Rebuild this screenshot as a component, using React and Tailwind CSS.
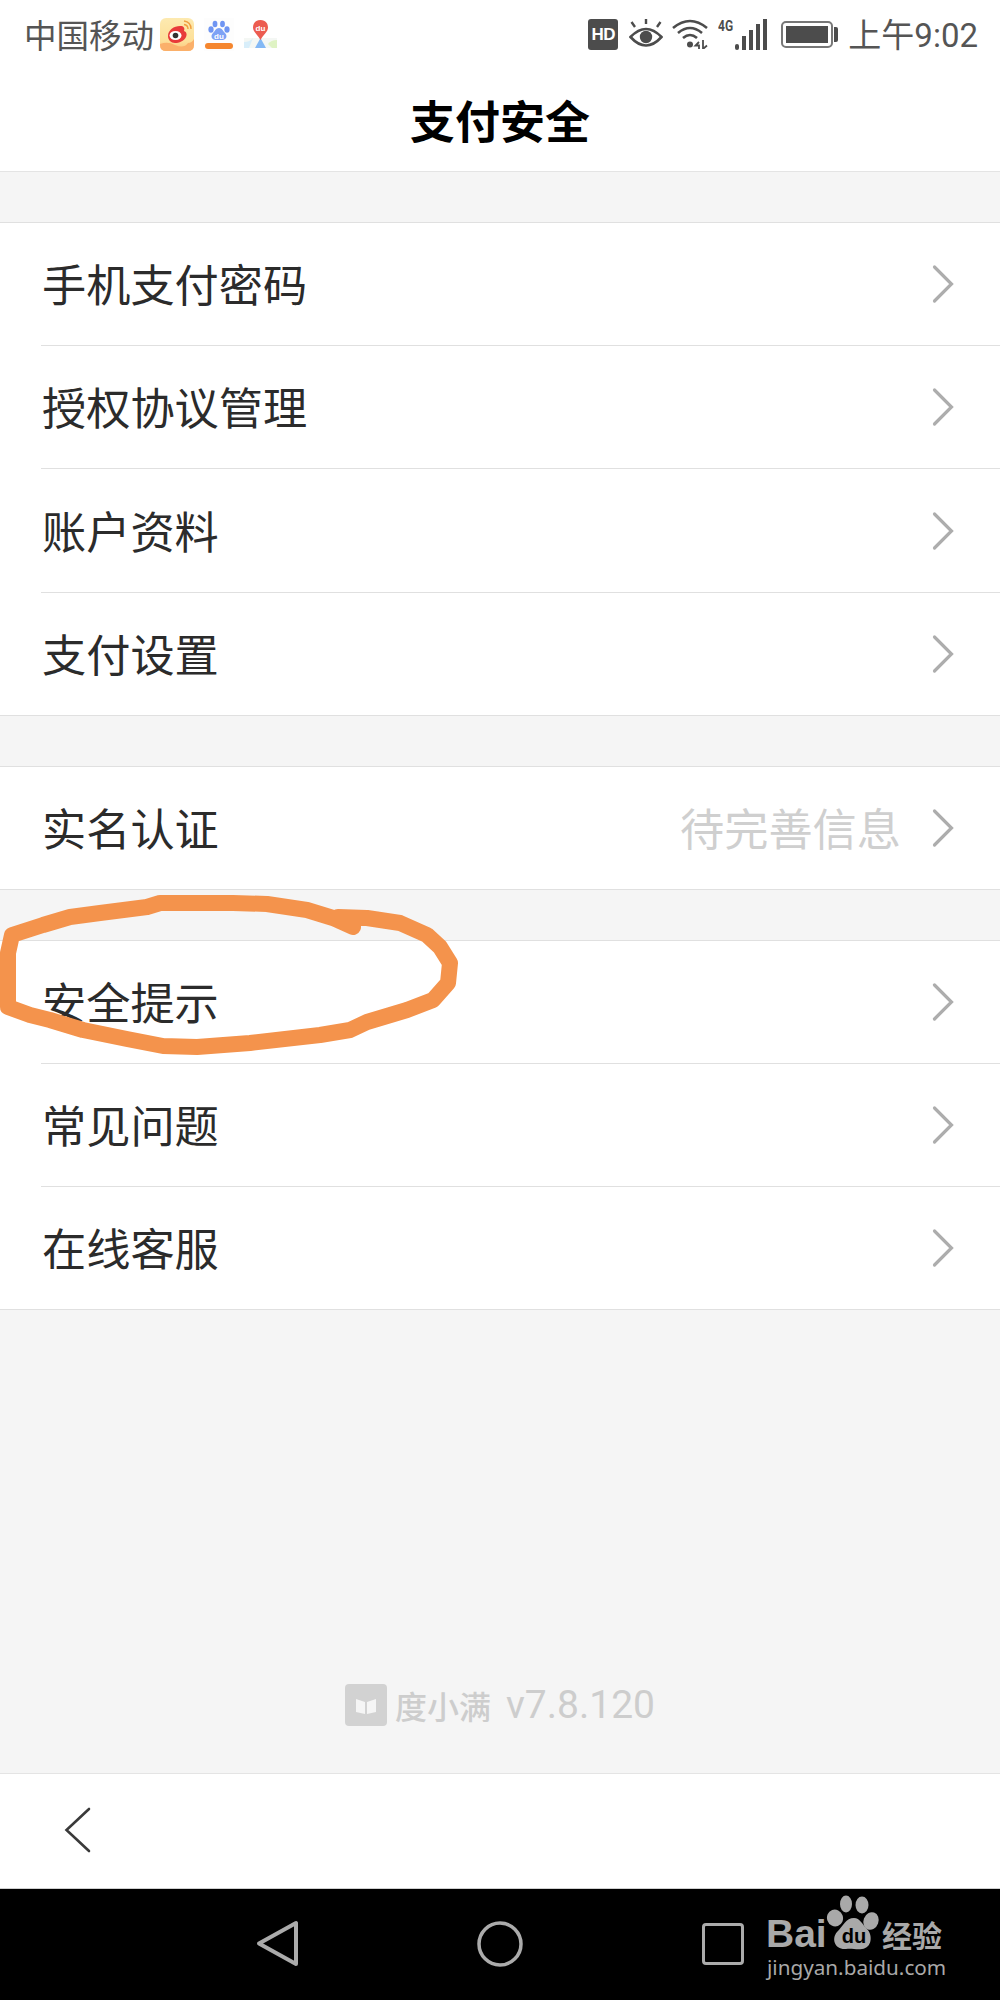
import React from "react";

const cjk = { fontFamily: '"Noto Sans CJK SC", "Noto Sans", sans-serif' };

function Chevron() {
  return (
    <svg width="24" height="40" viewBox="0 0 24 40" className="shrink-0" fill="none">
      <path d="M3.5 3 L20.5 20 L3.5 37" stroke="#adadad" strokeWidth="3.2" strokeLinecap="round" strokeLinejoin="miter" />
    </svg>
  );
}

function Row({ label, value, tall }) {
  return (
    <div className={tall ? "h-[123px] flex items-center pl-[42px] pr-[45px]" : "h-[122px] flex items-center pl-[42px] pr-[45px]"}>
      <span className="text-[44.2px] leading-none text-[#2b2b2b] flex-1 -mt-[1px]" style={cjk}>{label}</span>
      {value && <span className="text-[44.2px] leading-none text-[#cfcfcf] mr-[30px] -mt-[1px]" style={cjk}>{value}</span>}
      <Chevron />
    </div>
  );
}

function Group({ rows }) {
  return (
    <div className="bg-white border-y border-[#e0e0e0]">
      {rows.map((r, i) => (
        <div key={r.label}>
          {i > 0 && <div className="h-px ml-[41px] bg-[#e0e0e0]" />}
          <Row label={r.label} value={r.value} tall={r.tall} />
        </div>
      ))}
    </div>
  );
}

function Weibo() {
  return (
    <svg width="34" height="33" viewBox="0 0 34 33" className="shrink-0">
      <defs>
        <linearGradient id="wb" x1="0" y1="0" x2="0" y2="1">
          <stop offset="0" stopColor="#fdeab0" />
          <stop offset="0.7" stopColor="#fddf98" />
          <stop offset="1" stopColor="#fbc27a" />
        </linearGradient>
      </defs>
      <rect width="34" height="33" rx="6" fill="url(#wb)" />
      <path d="M0 26 Q8 23 15 27 Q24 31 28 25 Q32 25 34 21 V27 Q34 33 28 33 H6 Q0 33 0 27 Z" fill="#fbb06a" />
      <path d="M8 18 C8 12 14 8 20 8 C24 8 25 10 24 13 C27 14 27 17 26 19 C24 23 19 25 15 25 C11 25 8 22 8 18 Z" fill="#e83a3a" />
      <ellipse cx="15.5" cy="17.5" rx="6" ry="4.6" fill="#fff" />
      <circle cx="15.5" cy="17.5" r="2.8" fill="#333" />
      <path d="M24 3 Q31 4 31 11 M24 6.5 Q28 7 28 11" stroke="#f0a040" strokeWidth="1.4" fill="none" />
    </svg>
  );
}

function BaiduApp() {
  return (
    <svg width="30" height="33" viewBox="0 0 30 33" className="shrink-0">
      <rect width="30" height="33" fill="#fdfdfd" />
      <ellipse cx="11" cy="6" rx="2.4" ry="3.2" fill="#6f95f2" />
      <ellipse cx="18.5" cy="6" rx="2.4" ry="3.2" fill="#6f95f2" />
      <ellipse cx="7" cy="11.5" rx="2.6" ry="3.2" fill="#6f95f2" />
      <ellipse cx="23" cy="11.5" rx="2.6" ry="3.2" fill="#6f95f2" />
      <path d="M15 10 C18 10 19 13 21 15 C24 18 22 22 18.5 22 H11.5 C8 22 6 18 9 15 C11 13 12 10 15 10 Z" fill="#7ea2f5" />
      <text x="15" y="20.5" textAnchor="middle" fontSize="8" fill="#fff" fontFamily="Liberation Sans" fontWeight="700">du</text>
      <rect x="1" y="25" width="28" height="6" rx="3" fill="#f5862e" />
    </svg>
  );
}

function MapApp() {
  return (
    <svg width="33" height="29" viewBox="0 0 33 29" className="shrink-0">
      <path d="M0 18 H33 V28 H0 Z" fill="#f4f7f4" />
      <path d="M0 22 Q6 22 9 18 L5 28 H0 Z" fill="#d8eefa" />
      <path d="M33 20 Q27 20 24 24 L28 28 H33 Z" fill="#dff3c4" />
      <path d="M16.5 18 L22 28 H11 Z" fill="#83b8f5" />
      <path d="M16.5 0 C22 0 24 4 24 7.5 C24 12 19 15 16.5 20 C14 15 9 12 9 7.5 C9 4 11 0 16.5 0 Z" fill="#ec5c50" />
      <text x="16.5" y="10.5" textAnchor="middle" fontSize="8" fill="#fff" fontFamily="Liberation Sans" fontWeight="700">du</text>
    </svg>
  );
}

function StatusIcons() {
  return (
    <div className="flex items-center">
      <div className="w-[30px] h-[31px] rounded-[3px] bg-[#4c4c4c] flex items-center justify-center">
        <span className="text-white text-[17px] font-bold leading-none" style={{ fontFamily: '"Liberation Sans", sans-serif', letterSpacing: "-0.5px" }}>HD</span>
      </div>
      <svg width="34" height="30" viewBox="0 0 34 30" className="ml-[11px]" fill="none" stroke="#4c4c4c">
        <path d="M1.5 18 Q17 2 32.5 18 Q17 35 1.5 18 Z" strokeWidth="2.6" />
        <circle cx="17" cy="18" r="6.2" fill="#4c4c4c" stroke="none" />
        <path d="M6 8 L2.5 3 M17 5 V0 M28 8 L31.5 3" strokeWidth="2.4" />
      </svg>
      <svg width="38" height="30" viewBox="0 0 38 30" className="ml-[9px]" fill="none" stroke="#4c4c4c" strokeWidth="2.6">
        <path d="M1 9 Q18 -5 35 9" />
        <path d="M6 14 Q18 4 30 14" />
        <path d="M11 19 Q18 13 25 19" />
        <circle cx="18" cy="25.5" r="3" fill="#4c4c4c" stroke="none" />
        <path d="M27 23 L23.5 26.5 H27 V30 M31 21 V30 L35 26.5" strokeWidth="1.8" />
      </svg>
      <div className="relative w-[49px] h-[31px] ml-[8px]">
        <span className="absolute left-0 top-[-2px] text-[15px] leading-[18px] font-bold text-[#4c4c4c]" style={{ fontFamily: '"Roboto", sans-serif', transform: "scaleX(0.8)", transformOrigin: "left" }}>4G</span>
        <div className="absolute right-0 bottom-0 flex items-end gap-[3px]">
          <div className="w-[4px] h-[6px] bg-[#4c4c4c] rounded-full" />
          <div className="w-[4px] h-[14px] bg-[#4c4c4c]" />
          <div className="w-[4px] h-[20px] bg-[#4c4c4c]" />
          <div className="w-[4px] h-[26px] bg-[#4c4c4c]" />
          <div className="w-[4px] h-[31px] bg-[#4c4c4c]" />
        </div>
      </div>
      <div className="flex items-center ml-[14px]">
        <div className="w-[52px] h-[27px] border-2 border-[#777] rounded-[5px] p-[3px]">
          <div className="w-full h-full bg-[#4c4c4c]" />
        </div>
        <div className="w-[4px] h-[15px] ml-[1px] bg-[#4c4c4c] rounded-r-[2px]" />
      </div>
      <span className="ml-[10px] text-[33px] leading-none text-[#555]" style={{ fontFamily: '"Roboto", "Noto Sans CJK SC", sans-serif' }}>
        <span style={cjk}>上午</span>9:02
      </span>
    </div>
  );
}

const rows1 = [{ label: "手机支付密码" }, { label: "授权协议管理" }, { label: "账户资料", tall: true }, { label: "支付设置" }];
const rows2 = [{ label: "实名认证", value: "待完善信息" }];
const rows3 = [{ label: "安全提示" }, { label: "常见问题" }, { label: "在线客服" }];

const scribble =
  "M353 927 L333 918 L307 910 L267 904 L233 903 L160 903 L147 907 L100 913 L70 917 L43 925 L12 935 L8 953 L8 1007 L30 1015 L50 1020 L83 1030 L127 1039 L163 1046 L197 1047 L250 1043 L320 1035 L350 1030 L367 1022 L407 1010 L433 1000 L448 983 L450 963 L440 947 L427 935 L400 923 L367 918 L338 917";

export default function App() {
  return (
    <div className="relative w-[1000px] h-[2000px] overflow-hidden flex flex-col bg-[#f5f5f5]" style={cjk}>
      <header className="bg-white border-b border-[#e4e4e4] h-[172px] shrink-0">
        <div className="h-[68px] flex items-center justify-between pl-[24px] pr-[22px]">
          <div className="flex items-center">
            <span className="text-[32.5px] leading-none text-[#555] mr-[6px]" style={cjk}>中国移动</span>
            <Weibo />
            <span className="w-[10px]" />
            <BaiduApp />
            <span className="w-[10px]" />
            <MapApp />
          </div>
          <StatusIcons />
        </div>
        <div className="h-[102px] flex items-center justify-center">
          <h1 className="text-[45px] leading-none font-bold text-black" style={cjk}>支付安全</h1>
        </div>
      </header>

      <main className="flex flex-col gap-[50px] pt-[50px] shrink-0">
        <Group rows={rows1} />
        <Group rows={rows2} />
        <Group rows={rows3} />
      </main>

      <div className="flex-1 flex items-end justify-center pb-[47px]">
        <div className="flex items-center">
          <svg width="42" height="42" viewBox="0 0 42 42" className="shrink-0">
            <rect width="42" height="42" rx="4" fill="#d2d2d2" />
            <path d="M11 15 L20 18 V30 L11 28 Z M31 15 L22 18 V30 L31 28 Z" fill="#f5f5f5" />
          </svg>
          <span className="ml-[8px] text-[32px] leading-none font-medium text-[#cdcdcd]" style={cjk}>度小满</span>
          <span className="ml-[15px] text-[39px] leading-none text-[#cdcdcd]" style={{ fontFamily: '"Roboto", sans-serif' }}>v7.8.120</span>
        </div>
      </div>

      <div className="h-[115px] shrink-0 bg-white border-t border-[#e4e4e4] flex items-center pl-[64px]">
        <svg width="28" height="48" viewBox="0 0 28 48" fill="none" className="-mt-[2px]">
          <path d="M25 3 L2.5 24 L25 45" stroke="#3a3a3a" strokeWidth="2.6" strokeLinecap="round" />
        </svg>
      </div>

      <nav className="h-[112px] shrink-0 bg-black border-t border-[#cfcfcf] flex items-center pl-[256px]">
        <svg width="44" height="48" viewBox="0 0 44 48" fill="none" className="-mt-[2px]">
          <path d="M40 3 V44 L3 23.5 Z" stroke="#ababab" strokeWidth="4" strokeLinejoin="round" />
        </svg>
        <svg width="46" height="46" viewBox="0 0 46 46" fill="none" className="ml-[177px] -mt-[2px]">
          <circle cx="23" cy="23" r="21" stroke="#ababab" strokeWidth="3.5" />
        </svg>
        <div className="ml-[179px] -mt-[2px] w-[42px] h-[42px] border-[3.5px] border-[#ababab] rounded-[4px]" />
      </nav>

      {/* hand-drawn annotation over the page */}
      <svg width="1000" height="2000" viewBox="0 0 1000 2000" fill="none" className="absolute left-0 top-0 pointer-events-none">
        <path d={scribble} stroke="#f4934c" strokeWidth="16" strokeLinecap="round" strokeLinejoin="round" />
      </svg>

      {/* watermark */}
      <div className="absolute left-[760px] top-[1890px] w-[200px] h-[100px] text-[#a9a9a9]">
        <span className="absolute left-[6px] top-[24px] text-[39px] leading-[39px] font-bold" style={{ fontFamily: '"Liberation Sans", sans-serif' }}>Bai</span>
        <svg width="60" height="60" viewBox="0 0 60 60" className="absolute left-[66px] top-[3px]" fill="#a9a9a9">
          <ellipse cx="20" cy="11" rx="6" ry="8.5" />
          <ellipse cx="36" cy="12" rx="6.5" ry="8.5" />
          <ellipse cx="9" cy="25" rx="8" ry="8.5" transform="rotate(-20 9 25)" />
          <ellipse cx="45" cy="28" rx="7.5" ry="9" transform="rotate(20 45 28)" />
          <path d="M28 25 C34 25 36 31 41 36 C47 42 46 55 36 56 C30 57 26 55 20 56 C9 57 5 46 11 39 C17 33 20 25 28 25 Z" />
          <text x="28" y="50" textAnchor="middle" fontSize="20" fontWeight="700" fill="#000" fontFamily="Liberation Sans">du</text>
        </svg>
        <span className="absolute left-[122px] top-[27px] text-[30px] leading-[34px] font-bold" style={cjk}>经验</span>
        <span className="absolute left-[7px] top-[63px] text-[20.7px] leading-[28px]" style={{ fontFamily: '"Noto Sans", sans-serif' }}>jingyan.baidu.com</span>
      </div>
    </div>
  );
}
